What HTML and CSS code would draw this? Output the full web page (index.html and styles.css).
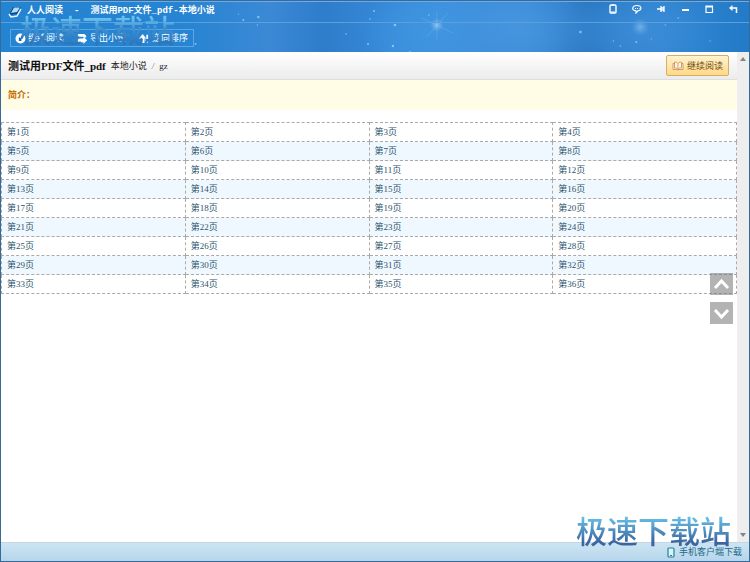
FILE: index.html
```html
<!DOCTYPE html>
<html lang="zh-CN">
<head>
<meta charset="utf-8">
<title>人人阅读 - 测试用PDF文件_pdf-本地小说</title>
<link rel="stylesheet" href="styles.css">
</head>
<body>
<div class="window">
  <header class="top">
    <svg class="sky" viewBox="0 0 750 52" preserveAspectRatio="xMidYMid slice" aria-hidden="true">
      <defs><radialGradient id="glow"><stop offset="0" stop-color="#9cd0f8" stop-opacity=".8"/><stop offset="1" stop-color="#6db2ee" stop-opacity="0"/></radialGradient></defs>
      <circle cx="437" cy="24" r="7" fill="url(#glow)"/>
      <path d="M422 17l31 15M427 36l21-24M437 10v28" stroke="#9accf5" stroke-width=".6" opacity=".4"/>
      <circle cx="641" cy="26" r="9" fill="url(#glow)" opacity=".7"/>
      <g fill="#a5dcf8" opacity=".7"><circle cx="258" cy="16" r="1.2"/><circle cx="243" cy="19" r="1"/><circle cx="238" cy="13" r=".6"/><circle cx="257" cy="24" r=".7"/><circle cx="374" cy="10" r="1"/><circle cx="370" cy="18" r=".8"/><circle cx="395" cy="24" r="1.3"/><circle cx="393" cy="45" r="1.2"/><circle cx="368" cy="43" r="1"/><circle cx="346" cy="33" r=".8"/><circle cx="429" cy="14" r=".8"/><circle cx="410" cy="51" r="1"/><circle cx="581" cy="31" r="1.3"/><circle cx="614" cy="40" r=".7"/><circle cx="637" cy="41" r="1"/><circle cx="621" cy="45" r=".8"/><circle cx="666" cy="24" r=".7"/><circle cx="679" cy="17" r=".8"/><circle cx="652" cy="38" r=".6"/><circle cx="711" cy="40" r=".6"/><circle cx="195" cy="43" r="1"/></g>
    </svg>
    <div class="titlebar">
      <svg class="logo" viewBox="0 0 14 12"><path d="M5 1h8l-4 7-8 1z" fill="#0b4b88"/><path d="M6 1.500h6L9 6 3 7z" fill="#a8dcf7"/><path d="M1 8l2 3 6-1 4-7" fill="none" stroke="#e4f5ff" stroke-width="1.500"/></svg>
      <h1 class="caption"><span>人人阅读</span><span>-</span><span>测试用PDF文件_pdf-本地小说</span></h1>
      <div class="controls">
        <button aria-label="手机"><svg viewBox="0 0 10 10"><rect x="2" y="1" width="6" height="8" rx="1" fill="none" stroke="#fff" stroke-width="1.400"/><path d="M3 8h4M4 1h2" stroke="#fff"/></svg></button>
        <button aria-label="消息"><svg viewBox="0 0 10 10"><path d="M5 1.500c5 0 5 5 1 5.300L4 9V6.800C-1 6.500 0 1.500 5 1.500z" fill="none" stroke="#fff" stroke-width="1.200"/><path d="M3 4.500h1m1 0h1m1 0h.5" stroke="#fff"/></svg></button>
        <button aria-label="置顶"><svg viewBox="0 0 10 10"><path d="M1 5h4M5 2v6M5 4h3v2H5M8 2v6" fill="none" stroke="#fff" stroke-width="1.300"/></svg></button>
        <button aria-label="最小化"><svg viewBox="0 0 10 10"><path d="M2 6h7" stroke="#fff" stroke-width="2"/></svg></button>
        <button aria-label="最大化"><svg viewBox="0 0 10 10"><path d="M2 2h6.500v6.500H2zM2 3h6" fill="none" stroke="#fff" stroke-width="1.200"/></svg></button>
        <button aria-label="返回"><svg viewBox="0 0 10 10"><path d="M2 4h6.500v5" fill="none" stroke="#fff" stroke-width="1.500"/><path d="M4.500 1v6L1 4z" fill="#fff"/></svg></button>
      </div>
    </div>
    <nav class="toolbar">
      <button><svg viewBox="0 0 12 12"><circle cx="6" cy="6" r="5.500" fill="#fff"/><path d="M6 7l4-6M5 5v3h2" fill="none" stroke="#1768b4" stroke-width="1.600"/></svg>继续阅读</button>
      <button><svg viewBox="0 0 12 12"><path d="M1 1h7l2 2v2H7V4H1zM1 6h6V4l4 4-4 4v-2H1z" fill="#fff"/></svg>导出小说</button>
      <button><svg viewBox="0 0 12 12"><path d="M0 6l4-5 4 5H6v5H3V6zM8 2h2v5h2l-3 4-3-4h2z" fill="#fff"/></svg>逆向排序</button>
    </nav>
    <div class="mark mark-top" aria-hidden="true">极速下载站</div>
  </header>
  <div class="body">
    <main class="content">
      <div class="book">
        <h2>测试用PDF文件_pdf</h2>
        <span>本地小说</span><i>/</i><span>gz</span>
        <button class="resume"><svg viewBox="0 0 12 10"><path d="M6 2.500C5 1 3.500 1 2.500 1.200V7C4 7 5 7 6 8.500 7 7 8 7 9.500 7V1.200C8.500 1 7 1 6 2.500zM6 2.500v6M2.500 2.500H1v6h4l1 .8 1-.8h4v-6H9.500" fill="#fff5e3" stroke="#c5884f" stroke-width=".8"/></svg>继续阅读</button>
      </div>
      <p class="intro">简介：</p>
      <table class="pages">
        <tbody>
        <tr><td><a href="#1">第1页</a></td><td><a href="#2">第2页</a></td><td><a href="#3">第3页</a></td><td><a href="#4">第4页</a></td></tr>
        <tr><td><a href="#5">第5页</a></td><td><a href="#6">第6页</a></td><td><a href="#7">第7页</a></td><td><a href="#8">第8页</a></td></tr>
        <tr><td><a href="#9">第9页</a></td><td><a href="#10">第10页</a></td><td><a href="#11">第11页</a></td><td><a href="#12">第12页</a></td></tr>
        <tr><td><a href="#13">第13页</a></td><td><a href="#14">第14页</a></td><td><a href="#15">第15页</a></td><td><a href="#16">第16页</a></td></tr>
        <tr><td><a href="#17">第17页</a></td><td><a href="#18">第18页</a></td><td><a href="#19">第19页</a></td><td><a href="#20">第20页</a></td></tr>
        <tr><td><a href="#21">第21页</a></td><td><a href="#22">第22页</a></td><td><a href="#23">第23页</a></td><td><a href="#24">第24页</a></td></tr>
        <tr><td><a href="#25">第25页</a></td><td><a href="#26">第26页</a></td><td><a href="#27">第27页</a></td><td><a href="#28">第28页</a></td></tr>
        <tr><td><a href="#29">第29页</a></td><td><a href="#30">第30页</a></td><td><a href="#31">第31页</a></td><td><a href="#32">第32页</a></td></tr>
        <tr><td><a href="#33">第33页</a></td><td><a href="#34">第34页</a></td><td><a href="#35">第35页</a></td><td><a href="#36">第36页</a></td></tr>
        </tbody>
      </table>
      <div class="jump">
        <button aria-label="顶部"><svg viewBox="0 0 23 22"><path d="M5 15l6.500-7 6.500 7" fill="none" stroke="#fff" stroke-width="3"/></svg></button>
        <button aria-label="底部"><svg viewBox="0 0 23 22"><path d="M5 8l6.500 7L18 8" fill="none" stroke="#fff" stroke-width="3"/></svg></button>
      </div>
    </main>
    <div class="scroll" aria-hidden="true">
      <svg viewBox="0 0 6 4"><path d="M0 4l3-4 3 4z" fill="#858585"/></svg>
      <svg viewBox="0 0 6 4"><path d="M0 0l3 4 3-4z" fill="#858585"/></svg>
    </div>
  </div>
  <footer class="status">
    <a href="#mobile"><svg viewBox="0 0 8 11"><rect x="1" y="1" width="6" height="9" rx="1" fill="#d8f4fa" stroke="#278099" stroke-width="1.200"/><path d="M3 8.500h2" stroke="#278099"/></svg>手机客户端下载</a>
  </footer>
  <div class="mark mark-bottom" aria-hidden="true">极速下载站</div>
</div>
</body>
</html>
```
FILE: styles.css
```css
* { box-sizing: border-box; }
body { margin: 0; font: 9px/18px "Liberation Serif", "Noto Sans CJK SC", serif; color: #222; }
button { border: 0; padding: 0; background: none; font: inherit; color: inherit; display: flex; align-items: center; }
a { color: #2c536c; text-decoration: none; }
.window { position: relative; display: flex; flex-direction: column; min-height: 100vh; border: 1px solid #356b9c; background: #fff; }

.top {
  position: relative;
  height: 51px;
  color: #fff;
  border-top: 1px solid #6eabe0;
  background:
    radial-gradient(ellipse 90px 60px at 69% 50%, #4795df, transparent),
    radial-gradient(ellipse 80px 50px at 86% 60%, #3c8cd7, transparent),
    radial-gradient(ellipse 70px 50px at 57% 60%, #4095e0, transparent),
    linear-gradient(90deg, #2584d2, #2684d2 24%, #3b89d5 36%, #2e7dcb 43%, #3b91df 58%, #3688d4 70%, #2774be 78%, #2f85d1 88%, #237bc8);
}
.sky { position: absolute; inset: 0; width: 100%; height: 100%; }
.titlebar { position: relative; display: flex; align-items: flex-start; height: 21px; padding: 0 4px 0 7px; border-bottom: 1px solid #5aa0dd; }
.logo { width: 14px; height: 12px; margin: 4px 5px 0 0; }
.caption { display: flex; gap: 11px; margin: 0; font: 700 9px/18px "Liberation Mono", "Noto Sans CJK SC", monospace; }
.controls { display: flex; margin-left: auto; }
.controls button { width: 24px; height: 14px; justify-content: center; }
.controls svg { width: 10px; height: 10px; }
.toolbar { display: flex; align-items: center; gap: 13px; width: max-content; height: 18px; margin: 6px 0 0 9px; padding: 0 5px 0 4px; border: 1px solid #5da7e0; }
.toolbar button { gap: 2px; }
.toolbar svg { width: 11px; height: 11px; }

.mark { position: absolute; font: 500 31px/36px "Noto Sans CJK SC", sans-serif; color: transparent; background-clip: text; -webkit-background-clip: text; pointer-events: none; white-space: nowrap; }
.mark-top { left: 19px; top: 9px; background-image: linear-gradient(#6cc0ee 20%, #3f8fcf 50%, #2d6fb0); }
.mark-bottom { right: 18px; bottom: 13px; background-image: linear-gradient(#65bfe5 15%, #3c64a0 85%); }

.body { flex: 1; display: flex; }
.content { position: relative; flex: 1; }
.book { display: flex; align-items: center; gap: 5px; height: 28px; padding: 0 8px 0 7px; border-bottom: 1px solid #dedede; background: linear-gradient(#fff, #ececec); }
.book h2 { margin: 0; font-size: 11px; color: #111; }
.book i { color: #777; }
.resume { gap: 3px; height: 21px; margin-left: auto; padding: 0 5px; border: 1px solid #d7ad68; border-radius: 2px; background: linear-gradient(#fff3ce, #ffd987); color: #704813; }
.resume svg { width: 12px; height: 10px; }
.intro { height: 30px; margin: 0 0 12px; padding: 6px 7px; background: #fffde5; color: #c46b00; font-weight: 700; }
.pages { width: 100%; table-layout: fixed; border-collapse: collapse; }
.pages td { height: 19px; padding: 0 5px; border: 1px dashed #aaa; }
.pages tr:nth-child(even) { background: #f0f8ff; }
.pages a { display: block; }
.jump { position: absolute; right: 4px; top: 221px; display: grid; gap: 7px; }
.jump button { width: 23px; height: 22px; background: rgba(120, 120, 120, .56); }
.scroll { display: flex; flex-direction: column; justify-content: space-between; align-items: center; width: 12px; padding: 5px 0; background: #eee; }
.scroll svg { width: 6px; height: 4px; }
.status { display: flex; justify-content: flex-end; height: 19px; padding: 0 7px; border-top: 1px solid #c5d6de; background: linear-gradient(#cce5f3, #b6d5eb); }
.status a { display: flex; align-items: center; gap: 4px; color: #236987; }
.status svg { width: 8px; height: 11px; }
```
